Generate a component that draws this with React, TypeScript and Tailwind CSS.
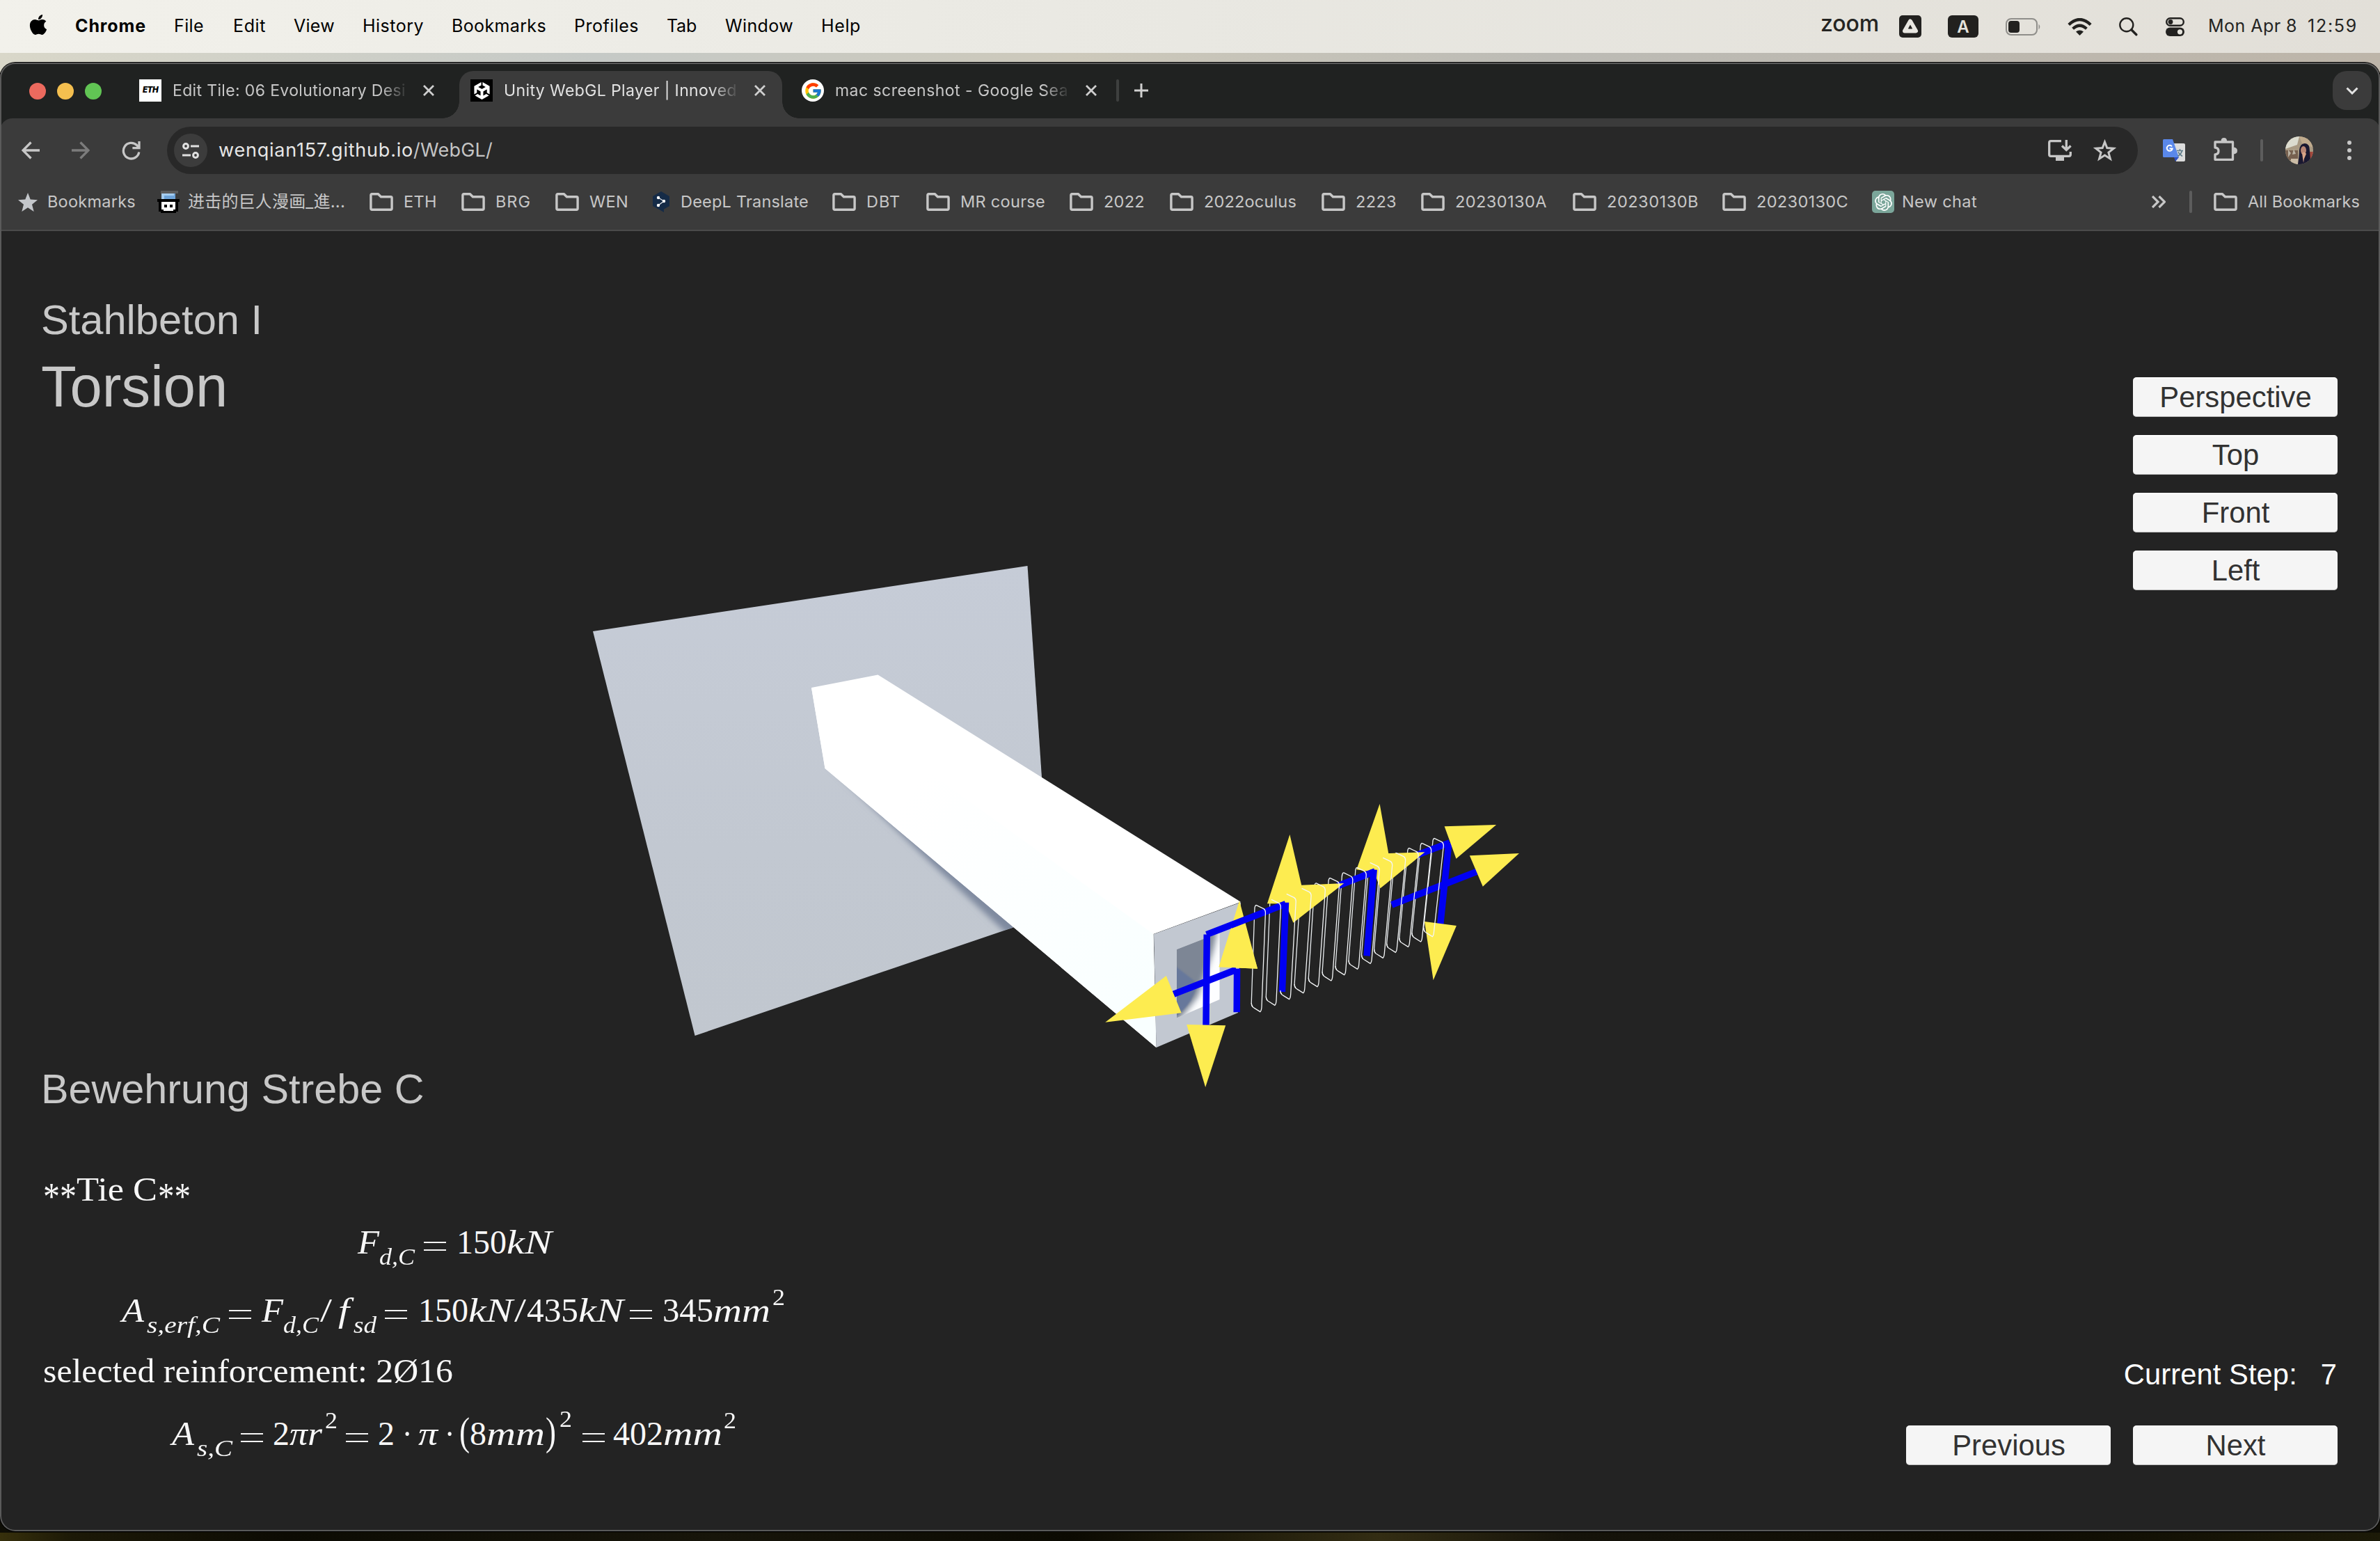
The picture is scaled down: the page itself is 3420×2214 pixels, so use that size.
import { useLayoutEffect, useRef, type ReactNode } from "react";
import { FaApple } from "react-icons/fa";
import { FcGoogle } from "react-icons/fc";
import { SiUnity, SiOpenai } from "react-icons/si";

/* Text that is tracked so that it fills exactly `w` pixels. */
function Fit({ w, className = "", children }: { w: number; className?: string; children: ReactNode }) {
  const ref = useRef<HTMLSpanElement>(null);
  useLayoutEffect(() => {
    const el = ref.current;
    if (!el) return;
    el.style.letterSpacing = "0px";
    const count = (el.textContent || "").length;
    const natural = el.getBoundingClientRect().width;
    el.style.letterSpacing = `${(w - natural) / count}px`;
  }, [w]);
  return (
    <span className="inline-block shrink-0" style={{ width: w }}>
      <span ref={ref} className={`inline-block whitespace-pre ${className}`}>
        {children}
      </span>
    </span>
  );
}

/* One formula token, stretched horizontally to `w` pixels. */
function M({ w, className = "", children }: { w: number; className?: string; children: ReactNode }) {
  const ref = useRef<HTMLSpanElement>(null);
  useLayoutEffect(() => {
    const el = ref.current;
    if (!el) return;
    el.style.transform = "none";
    const natural = el.getBoundingClientRect().width;
    el.style.transform = `scaleX(${w / natural})`;
  }, [w]);
  return (
    <span className={`inline-block shrink-0 ${className}`} style={{ width: w }}>
      <span ref={ref} className="inline-block origin-left whitespace-pre">
        {children}
      </span>
    </span>
  );
}

const sub = "mt-[21px] text-[34px] italic";
const sup = "-mt-[19px] text-[34px]";

function Eq({ className = "" }: { className?: string }) {
  return (
    <span className={`flex h-[60px] w-[32px] shrink-0 flex-col justify-center gap-[9px] pt-[10px] ${className}`}>
      <span className="h-[2px] bg-[#f4f4f4]" />
      <span className="h-[2px] bg-[#f4f4f4]" />
    </span>
  );
}

function Folder({ className = "" }: { className?: string }) {
  return (
    <svg className={`h-[26px] w-[34px] shrink-0 ${className}`} viewBox="0 0 34 26" fill="none" stroke="#c7c7c7" strokeWidth="3.4" strokeLinejoin="round">
      <path d="M1.9 3.4q0-1.6 1.6-1.6h8.9l4 4h14q1.7 0 1.7 1.7v15q0 1.7-1.7 1.7H3.6q-1.7 0-1.7-1.7z" />
    </svg>
  );
}

function Cross() {
  return (
    <svg className="h-4 w-4 shrink-0" viewBox="0 0 16 16" stroke="#cfcfcf" strokeWidth="2.8">
      <path d="M1 1l14 14M15 1L1 15" />
    </svg>
  );
}

/* Name, text width and the gap to the next bookmark. */
const bookmarks: [string, number, number][] = [
  ["DBT", 49, 37],
  ["MR course", 122, 35],
  ["2022", 59, 36],
  ["2022oculus", 133, 36],
  ["2223", 59, 35],
  ["20230130A", 132, 37],
  ["20230130B", 132, 34],
  ["20230130C", 132, 34],
];

function MenuBar() {
  return (
    <div className="flex h-[76px] items-center justify-between bg-linear-to-r from-[#f2f1eb] via-[#e9e8e2] to-[#e2dfd8] pr-[32px] pl-[40px] text-[25px] text-black">
      <div className="flex items-center pb-[1px]">
        <FaApple className="mr-[38px] h-[33px] w-[30px] -translate-y-[2px]" />
        <Fit w={102} className="font-bold">Chrome</Fit>
        <span className="w-[40px]" />
        <Fit w={43}>File</Fit>
        <span className="w-[42px]" />
        <Fit w={47}>Edit</Fit>
        <span className="w-[40px]" />
        <Fit w={59}>View</Fit>
        <span className="w-[40px]" />
        <Fit w={88}>History</Fit>
        <span className="w-[40px]" />
        <Fit w={136}>Bookmarks</Fit>
        <span className="w-[40px]" />
        <Fit w={93}>Profiles</Fit>
        <span className="w-[40px]" />
        <Fit w={43}>Tab</Fit>
        <span className="w-[41px]" />
        <Fit w={98}>Window</Fit>
        <span className="w-[40px]" />
        <Fit w={57}>Help</Fit>
      </div>
      <div className="flex items-center text-[#242422]">
        <Fit w={84} className="-translate-y-px text-[32px] leading-none font-medium">zoom</Fit>
        <svg className="ml-[29px] h-8 w-8" viewBox="0 0 32 32">
          <rect width="32" height="32" rx="5" fill="#22211f" />
          <path d="M16 8.5l8 14H8z" fill="none" stroke="#e9e7e1" strokeWidth="6" strokeLinejoin="round" />
          <path d="M16 13.5l3 5.5h-6z" fill="#22211f" />
        </svg>
        <span className="ml-[38px] flex h-8 w-[44px] items-center justify-center rounded-[6px] bg-[#22211f] pt-[2px] text-[24px] leading-none font-semibold text-[#e5e3dc]">A</span>
        <svg className="ml-[39px] h-[25px] w-[51px]" viewBox="0 0 51 25">
          <rect x="1" y="1" width="44" height="23" rx="7" fill="none" stroke="#8f8e8a" strokeWidth="2" />
          <rect x="4" y="4" width="16" height="17" rx="4" fill="#22211f" />
          <path d="M47.5 8.5q3.5 4 0 8z" fill="#8f8e8a" />
        </svg>
        <svg className="ml-[38px] h-[25px] w-[35px]" viewBox="0 0 35 25" fill="none" stroke="#22211f" strokeWidth="4.2">
          <path d="M1.8 9.5q15.7-15 31.4 0" />
          <path d="M7.6 15.2q9.9-9 19.8 0" />
          <path d="M17.5 25l-5.5-5.4q5.5-4.4 11 0z" fill="#22211f" stroke="none" />
        </svg>
        <svg className="ml-[39px] h-[27px] w-[27px]" viewBox="0 0 27 27" fill="none" stroke="#22211f">
          <circle cx="10.8" cy="10.8" r="9.5" strokeWidth="2.4" />
          <path d="M17.8 17.8l7 7" strokeWidth="3.4" strokeLinecap="round" />
        </svg>
        <svg className="ml-[40px] h-[27px] w-[27px]" viewBox="0 0 27 27" fill="none">
          <rect x="1.2" y="1.2" width="24.6" height="10.6" rx="5.3" stroke="#22211f" strokeWidth="2.4" />
          <circle cx="7" cy="6.5" r="3.4" fill="#22211f" />
          <rect y="14.5" width="27" height="12.5" rx="6.2" fill="#22211f" />
          <circle cx="20.5" cy="20.8" r="3.6" fill="#e5e3dc" />
        </svg>
        <span className="ml-[34px] flex pb-[1px]">
          <Fit w={128}>Mon Apr 8</Fit>
          <span className="w-[15px]" />
          <Fit w={72}>12:59</Fit>
        </span>
      </div>
    </div>
  );
}

const fade = "overflow-hidden [mask-image:linear-gradient(to_right,black_89%,transparent_101%)]";

function TabStrip() {
  return (
    <div className="flex h-[80px] items-end bg-[#202221] text-[23px] text-[#c7c7c7]">
      <div className="flex h-[68px] shrink-0 items-start pt-[17px] pl-[42px]">
        <span className="h-6 w-6 rounded-full bg-[#ec6a5e]" />
        <span className="ml-4 h-6 w-6 rounded-full bg-[#f4bf4f]" />
        <span className="ml-4 h-6 w-6 rounded-full bg-[#61c554]" />
      </div>
      <div className="flex h-[68px] w-[514px] shrink-0 items-center pb-[12px] pl-[54px]">
        <span className="flex h-8 w-8 shrink-0 items-center justify-center bg-white text-[11.5px] font-black text-black italic">
          <Fit w={22}>ETH</Fit>
        </span>
        <span className={`ml-[15px] w-[337px] shrink-0 pl-[1px] ${fade}`}>
          <Fit w={335}>Edit Tile: 06 Evolutionary Desi</Fit>
        </span>
        <span className="w-[24px]" />
        <Cross />
      </div>
      <div className="relative flex h-[68px] w-[464px] shrink-0 items-center rounded-t-[20px] bg-[#3b3b3b] pb-[12px] pl-[16px] text-[#e2e2e2]">
        <span className="absolute bottom-0 -left-[24px] h-[24px] w-[24px] bg-[radial-gradient(circle_at_0_0,#202221_23.5px,#3b3b3b_24px)]" />
        <span className="absolute -right-[24px] bottom-0 h-[24px] w-[24px] bg-[radial-gradient(circle_at_100%_0,#202221_23.5px,#3b3b3b_24px)]" />
        <span className="flex h-8 w-8 shrink-0 items-center justify-center bg-black">
          <SiUnity className="h-[25px] w-[25px] text-white" />
        </span>
        <span className={`ml-[15px] w-[336px] shrink-0 pl-[1px] ${fade}`}>
          <Fit w={335}>Unity WebGL Player | Innoved</Fit>
        </span>
        <span className="w-[25px]" />
        <Cross />
      </div>
      <div className="flex h-[68px] items-center pb-[12px] pl-[28px]">
        <span className="flex h-8 w-8 shrink-0 items-center justify-center rounded-full bg-white">
          <FcGoogle className="h-[27px] w-[27px]" />
        </span>
        <span className={`ml-[15px] w-[336px] shrink-0 pl-[1px] ${fade}`}>
          <Fit w={335}>mac screenshot - Google Sea</Fit>
        </span>
        <span className="w-[25px]" />
        <Cross />
        <span className="ml-[28px] h-8 w-1 rounded-full bg-[#3e403f]" />
        <svg className="ml-[22px] h-[20px] w-[20px]" viewBox="0 0 20 20" stroke="#d0d0d0" strokeWidth="3">
          <path d="M10 0v20M0 10h20" />
        </svg>
      </div>
      <div className="mr-[12px] mb-[12px] ml-auto flex h-[56px] w-[56px] items-center justify-center rounded-[20px] bg-[#3b3b3b]">
        <svg className="h-[11px] w-[18px]" viewBox="0 0 18 11" fill="none" stroke="#e3e3e3" strokeWidth="3">
          <path d="M1.5 1.5L9 9l7.5-7.5" />
        </svg>
      </div>
    </div>
  );
}

function Toolbar() {
  return (
    <div className="flex h-[92px] items-center">
      <svg className="ml-[31px] h-[26px] w-[26px]" viewBox="0 0 26 26" fill="none" stroke="#c7c7c7" strokeWidth="3.3">
        <path d="M13.5 1.5L2 13l11.5 11.5M2 13h24" />
      </svg>
      <svg className="ml-[46px] h-[26px] w-[26px]" viewBox="0 0 26 26" fill="none" stroke="#7c7c7c" strokeWidth="3.3">
        <path d="M12.5 1.5L24 13 12.5 24.5M24 13H0" />
      </svg>
      <svg className="ml-[46px] h-[27px] w-[27px]" viewBox="0 0 27 27" fill="none" stroke="#c7c7c7" strokeWidth="3.3">
        <path d="M24.8 15.5a11.3 11.3 0 1 1-3.3-10l2.5 2.5" />
        <path d="M25 0v9.6h-9.6" />
      </svg>
      <div className="ml-[38px] flex h-[68px] w-[2832px] items-center rounded-full bg-[#282828] pr-[31px] pl-[10px] text-[27px]">
        <span className="flex h-12 w-12 items-center justify-center rounded-full bg-[#3c3c3c]">
          <svg className="h-[23px] w-[24px]" viewBox="0 0 24 23" fill="none" stroke="#e0e0e0" strokeWidth="3">
            <circle cx="5" cy="5" r="3.4" />
            <path d="M12 5h12M0 18h12" />
            <circle cx="19" cy="18" r="3.4" />
          </svg>
        </span>
        <span className="ml-[16px] flex">
          <Fit w={280} className="text-[#e6e6e6]">wenqian157.github.io</Fit>
          <Fit w={114} className="text-[#c4c4c4]">/WebGL/</Fit>
        </span>
        <svg className="ml-auto h-[30px] w-[34px]" viewBox="0 0 34 30" fill="none" stroke="#c7c7c7" strokeWidth="3.3">
          <path d="M19 1.7H4q-2.3 0-2.3 2.3v17q0 2.3 2.3 2.3h26q2.3 0 2.3-2.3v-4" />
          <path d="M26.3 0v14M20 8.5l6.3 6 6.3-6" />
          <path d="M11 25h12v5H11z" fill="#c7c7c7" stroke="none" />
        </svg>
        <svg className="ml-[31px] h-[32px] w-[33px]" viewBox="0 0 33 32" fill="none" stroke="#c7c7c7" strokeWidth="3">
          <path d="M16.5 4l3.3 8.6 9.4.7-7.3 5.8 2.5 9.1-7.9-5.1-7.9 5.1 2.5-9.1-7.3-5.8 9.4-.7z" />
        </svg>
      </div>
      <svg className="ml-[36px] h-8 w-8" viewBox="0 0 32 32">
        <path d="M13 6h17q2 0 2 2v22q0 2-2 2H19z" fill="#dcdcdc" />
        <path d="M16 26h7l-5 6z" fill="#2f4fc0" />
        <path d="M1.5 0H14l9 26H1.5Q0 26 0 24.5v-23Q0 0 1.5 0z" fill="#5a88ea" />
        <path d="M13 10.5a4 4 0 1 0 .7 3H9.5" fill="none" stroke="#fff" strokeWidth="2" />
        <path d="M20 16.5h9M24.5 14v2.5M27.5 17q-1.5 4.5-6 7.5M22 18.5q2 3.5 6 6" fill="none" stroke="#607d8b" strokeWidth="1.6" />
      </svg>
      <svg className="-mt-[4px] ml-[41px] h-[33px] w-[34px]" viewBox="0 0 34 33" fill="none" stroke="#c7c7c7" strokeWidth="3.3" strokeLinejoin="round">
        <path d="M2 6h25.5v25.3H2V24q5-.5 5-5t-5-5z" />
        <path d="M10.5 5q0-5 4.3-5t4.3 5zM28.5 13.5q5.500.5 5.5 5t-5.5 5z" fill="#c7c7c7" stroke="none" />
      </svg>
      <span className="ml-[33px] h-8 w-1 rounded-full bg-[#5d5d5d]" />
      <svg className="ml-[32px] h-10 w-10" viewBox="0 0 40 40">
        <defs>
          <clipPath id="avatar"><circle cx="20" cy="20" r="20" /></clipPath>
        </defs>
        <g clipPath="url(#avatar)">
          <rect width="40" height="40" fill="#a99a83" />
          <path d="M0 0h20l-3 12L0 18z" fill="#dcdccf" />
          <path d="M20 0h14l6 16-16-6z" fill="#c0ab8d" />
          <path d="M0 20h18v14H0z" fill="#76604f" />
          <path d="M4 19l4 5-4 6zM12 18l3 7-5 1z" fill="#b9b2a3" />
          <path d="M8 32h10v8H8z" fill="#cabba5" />
          <path d="M35 22h5v10h-5z" fill="#a3483c" />
          <path d="M18 40q2-12 2-20 1-10 8-10t7 11q0 10 3 19z" fill="#1a1830" />
          <ellipse cx="26" cy="20" rx="4" ry="6" fill="#b98674" />
          <path d="M24 24q4-3 6 1l-3 7-1 6z" fill="#d9a487" />
        </g>
      </svg>
      <svg className="ml-[49px] h-[28px] w-[6px]" viewBox="0 0 6 28" fill="#c7c7c7">
        <circle cx="3" cy="3" r="3" /><circle cx="3" cy="14" r="3" /><circle cx="3" cy="25" r="3" />
      </svg>
    </div>
  );
}

function BookmarksBar() {
  return (
    <div className="flex h-[56px] items-center text-[23.5px] text-[#c7c7c7]">
      <svg className="ml-[26px] h-[27px] w-[28px]" viewBox="0 0 28 27" fill="#c3c6ca">
        <path d="M14 0l3.7 9.6 10.3.6-8 6.5L22.7 27 14 21.2 5.3 27 8 16.7 0 10.2l10.3-.6z" />
      </svg>
      <span className="w-[14px]" />
      <Fit w={127}>Bookmarks</Fit>
      <svg className="ml-[31px] h-8 w-8" viewBox="0 0 32 32">
        <path d="M5 0h25v4H5z" fill="#5c5c5c" />
        <path d="M6 4h20v8H6z" fill="#6ea3d8" />
        <path d="M6 4h18v3H10v5H6z" fill="#a5cdf0" />
        <path d="M0 12h32v4h-2v14h-3v2H5v-2H2V16H0z" fill="#000" />
        <path d="M6 16h20v11h-3v2H9v-2H6z" fill="#fff" />
        <path d="M10 20h4v4h-4zM18 20h4v4h-4z" fill="#000" />
      </svg>
      <span className="w-[12px]" />
      <Fit w={226} className="font-['Inter','Noto_Sans_CJK_SC',sans-serif] text-[24px] leading-none">进击的巨人漫画_進...</Fit>
      <Folder className="ml-[35px]" />
      <span className="w-[15px]" />
      <Fit w={48}>ETH</Fit>
      <Folder className="ml-[35px]" />
      <span className="w-[15px]" />
      <Fit w={51}>BRG</Fit>
      <Folder className="ml-[35px]" />
      <span className="w-[15px]" />
      <Fit w={56}>WEN</Fit>
      <svg className="ml-[34px] h-[30px] w-[26px]" viewBox="0 0 26 30">
        <path d="M13 0l12 7v14l-8 4.500V30l-5-3L1 21V7z" fill="#152b47" />
        <path d="M9 9l8 5-8 6" fill="none" stroke="#e9edf2" strokeWidth="1.2" />
        <circle cx="9" cy="9" r="2.2" fill="#fff" /><circle cx="17" cy="14" r="2.2" fill="#fff" /><circle cx="9" cy="20" r="2.2" fill="#fff" />
      </svg>
      <span className="w-[15px]" />
      <Fit w={184}>DeepL Translate</Fit>
      <span className="w-[34px]" />
      {bookmarks.map(([name, width, gap]) => (
        <span key={name} className="flex shrink-0 items-center" style={{ marginRight: gap }}>
          <Folder className="mr-[15px]" />
          <Fit w={width}>{name}</Fit>
        </span>
      ))}
      <span className="flex h-8 w-8 items-center justify-center rounded-[5px] bg-[#7ba69a]">
        <SiOpenai className="h-[25px] w-[25px] text-white" />
      </span>
      <span className="w-[11px]" />
      <Fit w={108}>New chat</Fit>
      <svg className="mr-[34px] ml-auto h-[18px] w-[20px] shrink-0" viewBox="0 0 20 18" fill="none" stroke="#c7c7c7" strokeWidth="3.2">
        <path d="M1 1l8 8-8 8M10.5 1l8 8-8 8" />
      </svg>
      <span className="h-8 w-1 shrink-0 rounded-full bg-[#5d5d5d]" />
      <Folder className="ml-[31px]" />
      <span className="w-[15px]" />
      <Fit w={161}>All Bookmarks</Fit>
      <span className="w-[29px]" />
    </div>
  );
}

/* Top-left and bottom-right corners of each stirrup. */
const stirrups: [number, number, number, number][] = [
  [582, 541, 598, 1001],
  [634, 517, 648, 973],
  [686, 493, 697, 947],
  [738, 469, 745, 920],
  [786, 446, 793, 893],
  [834, 424, 840, 867],
  [880, 401, 885, 842],
  [926, 379, 930, 817],
  [971, 358, 974, 793],
  [1015, 337, 1017, 769],
  [1060, 316, 1060, 745],
  [1104, 295, 1103, 721],
  [1148, 274, 1146, 699],
  [1190, 253, 1186, 677],
];

function Scene() {
  const thin = { fill: "none", strokeWidth: 1.3, vectorEffect: "non-scaling-stroke" as const };
  const bar = { fill: "none", stroke: "#0000f2", strokeWidth: 9.5, vectorEffect: "non-scaling-stroke" as const };
  return (
    <svg className="absolute inset-0 h-full w-full" viewBox="0 332 3420 1868">
      <defs>
        <linearGradient id="wall" x1="0" y1="0" x2="0" y2="1">
          <stop offset="0" stopColor="#c6ccd7" />
          <stop offset="0.6" stopColor="#c2c8d1" />
          <stop offset="1" stopColor="#c1c7cf" />
        </linearGradient>
        <linearGradient id="side" gradientUnits="userSpaceOnUse" x1="1300" y1="1150" x2="1660" y2="1420">
          <stop offset="0" stopColor="#ffffff" />
          <stop offset="1" stopColor="#f9ffff" />
        </linearGradient>
        <filter id="soft" x="-20%" y="-20%" width="140%" height="140%"><feGaussianBlur stdDeviation="4" /></filter>
        <clipPath id="wallClip"><path d="M852 907L1476.5 813 1497 1117 1456 1332.5 998.6 1488z" /></clipPath>
        <clipPath id="hole"><path d="M1691 1364L1752.5 1340V1436L1691 1462.500z" /></clipPath>
      </defs>
      <path d="M852 907L1476.5 813 1497 1117 1456 1332.5 998.6 1488z" fill="url(#wall)" />
      <g clipPath="url(#wallClip)">
        <path d="M1190 1100L1490 1350 1456 1350 1340 1242z" fill="#7e899f" filter="url(#soft)" />
      </g>
      <path d="M1166 988L1261.5 969.5 1783 1296 1657.5 1342 1661.5 1505 1185.5 1104z" fill="#fff" />
      <path d="M1166 988L1657.5 1342 1661.5 1505 1185.5 1104z" fill="url(#side)" />
      <path d="M1658 1342L1783 1296.5 1779 1455 1661.5 1505z" fill="#c2c8d1" />
      <g clipPath="url(#hole)">
        <rect x="1680" y="1330" width="80" height="140" fill="#fdfeff" />
        <path d="M1680 1330h70q-4 30-11 50t-18 52l-28 36h-13z" fill="#7d8695" filter="url(#soft)" />
        <path d="M1680 1381l36 28q6 5 0 18-8 20-25 32h-11z" fill="#67789b" className="blur-[1px]" />
      </g>
      <g transform="translate(1560 1120) scale(.42092 .33333)">
        {stirrups.map(([tx, ty, bx, by]) => (
          <path key={tx} {...thin} stroke="#e9edf0" d={`M${tx} ${ty}q-5 5-5 18L${bx - 32} ${by - 38}q0 12 5 17`} />
        ))}
        <path {...bar} d="M860 459L985 397M1130 326L1243 272M1045 540L1335 397M1240 272L1211 625" />
        <g fill="#fdec50">
          <path d="M697 237L737 455 882 447 709 617 683 535 620 535z" />
          <path d="M1004 105L1034 318 1158 313 1006 469 985 400 925 388z" />
          <path d="M1225 202L1402 195 1265 341z" />
          <path d="M1311 328L1480 318 1356 461z" />
          <path d="M1157 612L1266 630 1187 865z" />
          <path d="M525 522L455 808 587 815z" />
        </g>
        <path {...bar} d="M413 668L683 536M683 530L671 915M940 419L988 396M984 388L960 760" />
        <path {...bar} d="M300 925L515 819M517 815L516 1003M414 668L411 1062" />
        <g fill="#fdec50">
          <path d="M497 640L455 808 587 815 556 690z" />
          <path d="M275 846L67 1046 327 1006z" />
          <path d="M345 1056L478 1060 409 1326z" />
        </g>
        {stirrups.map(([tx, ty, bx, by]) => (
          <path
            key={tx}
            {...thin}
            stroke="#f4f6f7"
            d={`M${tx} ${ty}l26 16q6 5 6 16L${bx + 3} ${by - 20}q-1 16-5 20l-20-16q-10-6-10-22`}
          />
        ))}
      </g>
    </svg>
  );
}

function UnityButton({ children }: { children: string }) {
  return (
    <button className="flex h-[57px] w-[294px] items-center justify-center rounded-[5px] border-t-2 border-b border-t-white border-b-[#bdbdbd] bg-[#f5f5f5] pl-[1px] text-[41.8px] leading-none text-[#323232]">
      {children}
    </button>
  );
}

function Canvas() {
  return (
    <div className="relative flex h-[1868px] justify-between bg-[#232323] font-['Liberation_Sans',sans-serif]">
      <Scene />
      <div className="relative flex w-[1300px] flex-col pt-[98px] pl-[59px] text-[#c8c8c8]">
        <h2 className="text-[59.6px] leading-[60px]">Stahlbeton I</h2>
        <h1 className="mt-[24px] text-[83.2px] leading-[84px]">Torsion</h1>
        <h3 className="mt-[937px] text-[59.3px] leading-[60px]">Bewehrung Strebe C</h3>
        <div className="flex flex-col pl-[3px] font-['Liberation_Serif',serif] text-[48px] leading-[60px] text-[#f7f7f7]">
          <div className="mt-[84px] flex h-[60px] items-start">
            <M w={48} className="mt-[10px] text-[54px]">**</M>
            <M w={68}>Tie</M>
            <M w={35} className="ml-[13px]">C</M>
            <M w={47} className="mt-[10px] ml-[1px] text-[54px]">**</M>
          </div>
          <div className="mt-[16px] flex h-[60px] items-start pl-[452px] italic">
            <M w={31}>F</M>
            <M w={51} className={sub}>d,C</M>
            <Eq className="mr-[15px] ml-[13px]" />
            <M w={72} className="not-italic">150</M>
            <M w={65}>kN</M>
          </div>
          <div className="mt-[38px] flex h-[60px] items-start pl-[113px] italic">
            <M w={32}>A</M>
            <M w={105} className={`ml-[4px] ${sub}`}>s,erf,C</M>
            <Eq className="mr-[15px] ml-[13px]" />
            <M w={31}>F</M>
            <M w={51} className={sub}>d,C</M>
            <M w={17} className="ml-[2px] not-italic">/</M>
            <M w={16} className="mr-[6px] ml-[9px]">f</M>
            <M w={33} className={sub}>sd</M>
            <Eq className="mr-[16px] ml-[12px]" />
            <M w={72} className="not-italic">150</M>
            <M w={64}>kN</M>
            <M w={17} className="ml-[2px] mr-[1px] not-italic">/</M>
            <M w={74} className="not-italic">435</M>
            <M w={65}>kN</M>
            <Eq className="mr-[15px] ml-[9px]" />
            <M w={73} className="not-italic">345</M>
            <M w={82}>mm</M>
            <M w={18} className={`ml-[3px] not-italic ${sup}`}>2</M>
          </div>
          <div className="mt-[27px] flex h-[60px] items-start">
            <M w={589}>selected reinforcement: 2Ø16</M>
          </div>
          <div className="mt-[30px] flex h-[60px] items-start pl-[185px] italic">
            <M w={32}>A</M>
            <M w={51} className={`ml-[4px] ${sub}`}>s,C</M>
            <Eq className="mr-[14px] ml-[12px]" />
            <M w={24} className="not-italic">2</M>
            <M w={26}>π</M>
            <M w={21}>r</M>
            <M w={18} className={`ml-[4px] not-italic ${sup}`}>2</M>
            <Eq className="mr-[14px] ml-[12px]" />
            <M w={24} className="not-italic">2</M>
            <M w={11} className="ml-[12px]">·</M>
            <M w={28} className="ml-[11px]">π</M>
            <M w={11} className="ml-[11px]">·</M>
            <M w={15} className="ml-[9px] -mt-[3px] text-[58px] not-italic">(</M>
            <M w={24} className="not-italic">8</M>
            <M w={84}>mm</M>
            <M w={15} className="-mt-[3px] ml-[1px] text-[58px] not-italic">)</M>
            <M w={18} className={`ml-[5px] -translate-y-[2px] not-italic ${sup}`}>2</M>
            <Eq className="mr-[12px] ml-[15px]" />
            <M w={72} className="not-italic">402</M>
            <M w={85}>mm</M>
            <M w={18} className={`ml-[2px] not-italic ${sup}`}>2</M>
          </div>
        </div>
      </div>
      <div className="relative flex flex-col items-end justify-between pt-[210px] pr-[61px] pb-[95px]">
        <div className="flex flex-col gap-[26px]">
          <UnityButton>Perspective</UnityButton>
          <UnityButton>Top</UnityButton>
          <UnityButton>Front</UnityButton>
          <UnityButton>Left</UnityButton>
        </div>
        <div className="flex flex-col items-end">
          <div className="flex h-[48px] pr-px text-[41.7px] leading-[48px] text-white">
            <Fit w={249}>Current Step:</Fit>
            <span className="ml-[34px]">7</span>
          </div>
          <div className="mt-[49px] flex gap-[32px]">
            <UnityButton>Previous</UnityButton>
            <UnityButton>Next</UnityButton>
          </div>
        </div>
      </div>
    </div>
  );
}

export default function App() {
  return (
    <div className="flex h-[2214px] w-[3420px] flex-col overflow-hidden bg-[linear-gradient(to_right,#d9d7c9,#c5c9c6_25%,#cdc9bb_45%,#bcbbb5_65%,#bdb5a9)] font-['Inter',sans-serif]">
      <MenuBar />
      <div className="flex h-[2138px] flex-col bg-[linear-gradient(to_bottom,transparent_1000px,#0e0d05_1000px)] pt-[14px]">
        <div className="relative overflow-hidden rounded-[22px] shadow-[0_0_0_1px_#000]">
          <TabStrip />
          <div className="h-[162px] bg-[#202221]">
            <div className="h-[162px] rounded-t-[18px] border-b-2 border-[#4a4a4a] bg-[#3b3b3b]">
              <Toolbar />
              <BookmarksBar />
            </div>
          </div>
          <Canvas />
          <div className="pointer-events-none absolute inset-0 rounded-[22px] border-2 border-[#5a5a5a]" />
        </div>
        <div className="mt-[2px] h-[12px] bg-[linear-gradient(to_right,#37300c,#1c1907_3%,#0c0b03_12%,#17150a_30%,#0b0a02_45%,#332d13_58%,#15130a_66%,#0e0c03_85%,#1c1a08)]" />
      </div>
    </div>
  );
}
